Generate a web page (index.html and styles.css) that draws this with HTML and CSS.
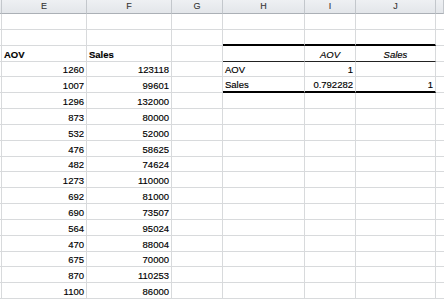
FILE: index.html
```html
<!DOCTYPE html>
<html>
<head>
<meta charset="utf-8">
<link rel="stylesheet" href="styles.css">
</head>
<body>
<div class="sheet">
  <div class="row hdr">
    <div class="c"></div><div class="c">E</div><div class="c">F</div><div class="c">G</div><div class="c">H</div><div class="c">I</div><div class="c">J</div><div class="c"></div>
  </div>
  <div class="row h16">
    <div class="c"></div><div class="c"></div><div class="c"></div><div class="c"></div><div class="c"></div><div class="c"></div><div class="c"></div><div class="c"></div>
  </div>
  <div class="row h16">
    <div class="c"></div><div class="c"></div><div class="c"></div><div class="c"></div><div class="c thick"></div><div class="c thick"></div><div class="c thick"></div><div class="c"></div>
  </div>
  <div class="row h16">
    <div class="c"></div><div class="c b">AOV</div><div class="c b">Sales</div><div class="c"></div><div class="c thin"></div><div class="c thin it">AOV</div><div class="c thin it">Sales</div><div class="c"></div>
  </div>
  <div class="row h15">
    <div class="c"></div><div class="c n">1260</div><div class="c n">123118</div><div class="c"></div><div class="c">AOV</div><div class="c n">1</div><div class="c"></div><div class="c"></div>
  </div>
  <div class="row h16">
    <div class="c"></div><div class="c n">1007</div><div class="c n">99601</div><div class="c"></div><div class="c thick">Sales</div><div class="c n thick">0.792282</div><div class="c n thick">1</div><div class="c"></div>
  </div>
  <div class="row h16">
    <div class="c"></div><div class="c n">1296</div><div class="c n">132000</div><div class="c"></div><div class="c"></div><div class="c"></div><div class="c"></div><div class="c"></div>
  </div>
  <div class="row h16">
    <div class="c"></div><div class="c n">873</div><div class="c n">80000</div><div class="c"></div><div class="c"></div><div class="c"></div><div class="c"></div><div class="c"></div>
  </div>
  <div class="row h16">
    <div class="c"></div><div class="c n">532</div><div class="c n">52000</div><div class="c"></div><div class="c"></div><div class="c"></div><div class="c"></div><div class="c"></div>
  </div>
  <div class="row h16">
    <div class="c"></div><div class="c n">476</div><div class="c n">58625</div><div class="c"></div><div class="c"></div><div class="c"></div><div class="c"></div><div class="c"></div>
  </div>
  <div class="row h15">
    <div class="c"></div><div class="c n">482</div><div class="c n">74624</div><div class="c"></div><div class="c"></div><div class="c"></div><div class="c"></div><div class="c"></div>
  </div>
  <div class="row h16">
    <div class="c"></div><div class="c n">1273</div><div class="c n">110000</div><div class="c"></div><div class="c"></div><div class="c"></div><div class="c"></div><div class="c"></div>
  </div>
  <div class="row h16">
    <div class="c"></div><div class="c n">692</div><div class="c n">81000</div><div class="c"></div><div class="c"></div><div class="c"></div><div class="c"></div><div class="c"></div>
  </div>
  <div class="row h16">
    <div class="c"></div><div class="c n">690</div><div class="c n">73507</div><div class="c"></div><div class="c"></div><div class="c"></div><div class="c"></div><div class="c"></div>
  </div>
  <div class="row h16">
    <div class="c"></div><div class="c n">564</div><div class="c n">95024</div><div class="c"></div><div class="c"></div><div class="c"></div><div class="c"></div><div class="c"></div>
  </div>
  <div class="row h16">
    <div class="c"></div><div class="c n">470</div><div class="c n">88004</div><div class="c"></div><div class="c"></div><div class="c"></div><div class="c"></div><div class="c"></div>
  </div>
  <div class="row h15">
    <div class="c"></div><div class="c n">675</div><div class="c n">70000</div><div class="c"></div><div class="c"></div><div class="c"></div><div class="c"></div><div class="c"></div>
  </div>
  <div class="row h16">
    <div class="c"></div><div class="c n">870</div><div class="c n">110253</div><div class="c"></div><div class="c"></div><div class="c"></div><div class="c"></div><div class="c"></div>
  </div>
  <div class="row h16">
    <div class="c"></div><div class="c n">1100</div><div class="c n">86000</div><div class="c"></div><div class="c"></div><div class="c"></div><div class="c"></div><div class="c"></div>
  </div>
</div>
</body>
</html>
```
FILE: styles.css
```css
html, body {
  margin: 0;
  padding: 0;
  background: #ffffff;
}
.sheet {
  width: 444px;
  height: 299px;
  overflow: hidden;
  display: flex;
  flex-direction: column;
  font-family: "Liberation Sans", Arial, sans-serif;
  font-size: 9.5px;
  color: #000;
  -webkit-text-stroke: 0.15px #000;
}
.row {
  display: grid;
  grid-template-columns: 2px 85px 85px 51px 82px 51px 80px 8px;
  flex: none;
}
.h16 { height: 16px; }
.h15 { height: 15px; }
.c {
  box-sizing: border-box;
  border-right: 1px solid #d8dadc;
  border-bottom: 1px solid #d8dadc;
  display: flex;
  align-items: flex-end;
  padding: 0 2px 1px 2px;
  line-height: 11px;
  white-space: nowrap;
  overflow: hidden;
}
.c:first-child { padding: 0; }
.c:last-child { border-right: none; }
.hdr { height: 14px; }
.hdr .c {
  background: linear-gradient(#eef0f3, #e3e6ea);
  border-right: 1px solid #c3c7cc;
  border-bottom: 1px solid #abb0b6;
  justify-content: center;
  align-items: center;
  padding: 0;
  font-size: 9px;
  color: #333;
  -webkit-text-stroke: 0.1px #333;
  line-height: 13px;
}
.n { justify-content: flex-end; }
.b { font-weight: bold; }
.it { font-style: italic; justify-content: center; }
.thick { border-bottom: 2px solid #000; }
.thin { border-bottom: 1px solid #222; }
```
